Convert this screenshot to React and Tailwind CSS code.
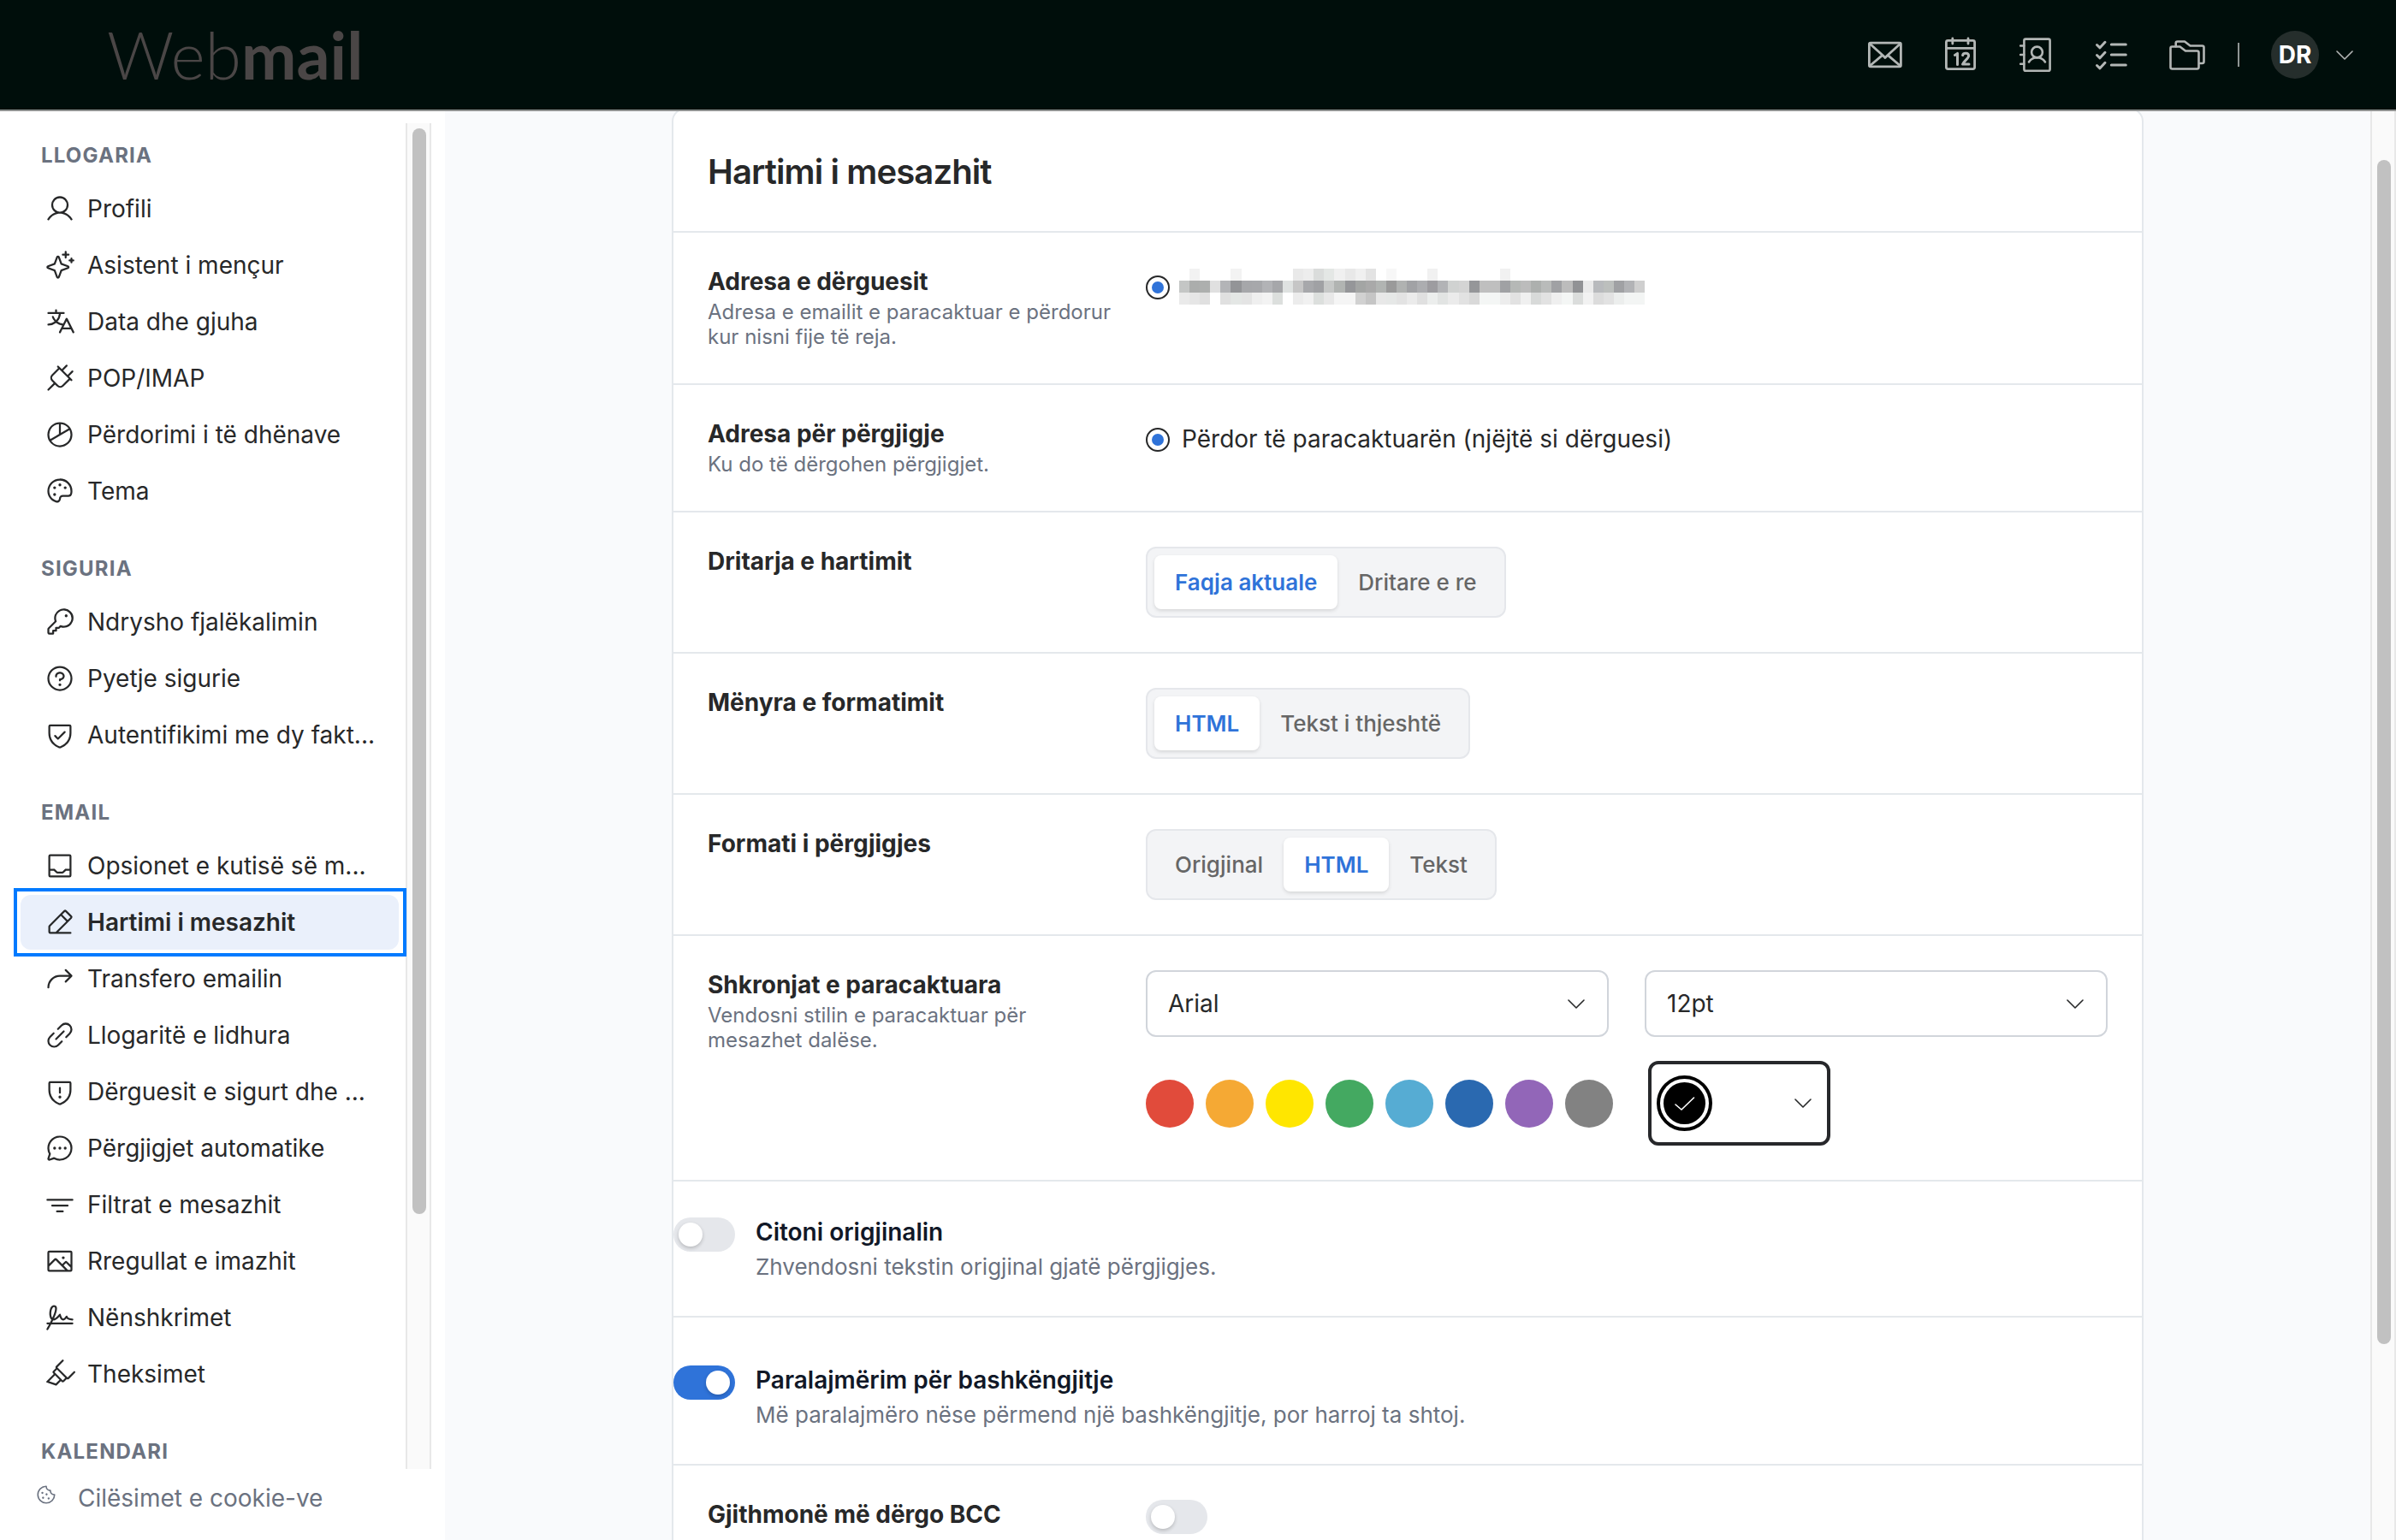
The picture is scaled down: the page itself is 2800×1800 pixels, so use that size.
import React, { useState } from "react";
import {
  PiUser,
  PiSparkle,
  PiTranslate,
  PiPlug,
  PiChartPie,
  PiPalette,
  PiKey,
  PiQuestion,
  PiShieldCheck,
  PiTray,
  PiPencilSimpleLine,
  PiArrowBendUpRight,
  PiLinkSimple,
  PiShieldWarning,
  PiChatCircleDots,
  PiFunnelSimple,
  PiImage,
  PiSignature,
  PiHighlighter,
  PiCookie,
} from "react-icons/pi";

const sections = [
  {
    title: "LLOGARIA",
    items: [
      { icon: PiUser, display: "Profili" },
      { icon: PiSparkle, display: "Asistent i mençur" },
      { icon: PiTranslate, display: "Data dhe gjuha" },
      { icon: PiPlug, display: "POP/IMAP" },
      { icon: PiChartPie, display: "Përdorimi i të dhënave" },
      { icon: PiPalette, display: "Tema" },
    ],
  },
  {
    title: "SIGURIA",
    items: [
      { icon: PiKey, display: "Ndrysho fjalëkalimin" },
      { icon: PiQuestion, display: "Pyetje sigurie" },
      { icon: PiShieldCheck, display: "Autentifikimi me dy fakt..." },
    ],
  },
  {
    title: "EMAIL",
    items: [
      { icon: PiTray, display: "Opsionet e kutisë së m..." },
      { icon: PiPencilSimpleLine, display: "Hartimi i mesazhit" },
      { icon: PiArrowBendUpRight, display: "Transfero emailin" },
      { icon: PiLinkSimple, display: "Llogaritë e lidhura" },
      { icon: PiShieldWarning, display: "Dërguesit e sigurt dhe ..." },
      { icon: PiChatCircleDots, display: "Përgjigjet automatike" },
      { icon: PiFunnelSimple, display: "Filtrat e mesazhit" },
      { icon: PiImage, display: "Rregullat e imazhit" },
      { icon: PiSignature, display: "Nënshkrimet" },
      { icon: PiHighlighter, display: "Theksimet" },
    ],
  },
  { title: "KALENDARI", items: [] },
];

const swatches = [
  "bg-[#e14b3b]",
  "bg-[#f5a934]",
  "bg-[#ffe600]",
  "bg-[#44a961]",
  "bg-[#56acd3]",
  "bg-[#2a69b0]",
  "bg-[#9266b8]",
  "bg-[#828282]",
];

// Pixelated sender address, three rows of 45 blocks
const mosaic = [
  "fff f2f2f2 fff fff fff f3f3f3 fff fff fff fff fff e9e9e9 ededed dadcdb e4e7e5 f0f0f0 e8e8e8 f0f0f0 e3e3e3 fff f7f7f7 fff fff fff f1f1f1 fff fff fff fff fff fff f1f1f1 fff fff fff fff fff fff fff fff fff fff fff fff fff",
  "c4c6c5 abadac adafae e0e0e0 b3b4b7 939497 a6a7aa a7a8ab b2b3b6 a6a7aa dfe2e1 c6c6c6 a7a8ab a0a1a4 c6c8c7 b1b4b2 959699 a3a5a4 a9a9a9 b1b4b2 9a9a9a b0b2b1 a1a2a5 acadb0 9d9ca0 b2b3b6 d0d2d1 d4d4d4 959699 bfbfbf bfbfbf a0a1a4 b5b8b6 bcbcbc adb0ae b9bbba a0a1a4 bcbcbc 919295 eaeaea b8babd bcbfbd a0a1a4 b2b3b6 cfcfcf",
  "eaeaea e6e6e6 e0e0e0 fff e0e0e0 e4e7e5 e4e4e4 efefef f3f3f3 dcdfdd fff ececec f1f1f1 dcdfdd e8e8e8 f5f5f5 f5f5f5 d1d1d1 c5c5c5 e8e8e8 e6e8e7 e3e3e3 ebebeb e0e0e0 eceeed e2e4e3 ebebeb e2e2e2 d9d9d9 f4f6f5 f4f6f5 ededed e2e2e2 f0f0f0 d8dad9 e2e2e2 efefef f4f6f5 dbdddc f2f2f2 dcdcdc e2e2e2 eceeed f3f5f4 f3f5f4",
].map((row) => row.split(" "));

const Chevron = ({ className }) => (
  <svg
    viewBox="0 0 20 11"
    fill="none"
    stroke="currentColor"
    strokeWidth="1.6"
    strokeLinecap="round"
    strokeLinejoin="round"
    className={className}
  >
    <path d="M1 1l9 9 9-9" />
  </svg>
);

const HeaderIcons = () => (
  <div className="flex items-center gap-[42px] text-[#b3b7b6]">
    {/* Mail */}
    <svg viewBox="0 0 46 46" className="w-[46px] h-[46px]" fill="none" stroke="currentColor" strokeWidth="2.8" strokeLinecap="round" strokeLinejoin="round">
      <rect x="4.4" y="9.2" width="37" height="27.6" rx="1.6" />
      <path d="M5 10l15.300 13.700 2.700 2.800 2.700-2.800L40.800 10M5 36l15-12.600M40.800 36L26 23.400" />
    </svg>
    {/* Calendar */}
    <svg viewBox="0 0 46 46" className="w-[46px] h-[46px]" fill="none" stroke="currentColor" strokeWidth="2.8" strokeLinecap="round" strokeLinejoin="round">
      <rect x="6.400" y="6.400" width="33.200" height="33.200" rx="2" />
      <path d="M6.400 15.300h33.200M13.800 4v6M32 4v6" />
      <path d="M16.500 23.400l3-2v13M25.600 23.600c.6-3 7-3.300 7 .6 0 3-5.500 6-7 9.900h7.400" strokeWidth="3" />
    </svg>
    {/* Contacts */}
    <svg viewBox="0 0 46 46" className="w-[46px] h-[46px]" fill="none" stroke="currentColor" strokeWidth="2.6" strokeLinecap="round" strokeLinejoin="round">
      <rect x="9.400" y="4.600" width="30.200" height="37.200" rx="1.800" />
      <path d="M5.200 12.500h4M5.200 23h4M5.200 33.700h4" />
      <circle cx="24.500" cy="20" r="6.400" />
      <path d="M15 31.500c4.500-7 14.500-7 19 0" />
    </svg>
    {/* Tasks */}
    <svg viewBox="0 0 46 46" className="w-[46px] h-[46px]" fill="none" stroke="currentColor" strokeWidth="3" strokeLinecap="round" strokeLinejoin="round">
      <path d="M6.500 11.500l3.500 3.300 6-6.500M6.500 23.500l3.500 3.300 6-6.500M6.500 35.500l3.500 3.300 6-6.500M23.300 11h17M23.300 23h17M23.300 35h17" />
    </svg>
    {/* Files */}
    <svg viewBox="0 0 46 46" className="w-[46px] h-[46px]" fill="none" stroke="currentColor" strokeWidth="2.6" strokeLinecap="round" strokeLinejoin="round">
      <path d="M4.500 15.300q0-1.800 1.800-1.800h9.200l6.500 5h13.500q2 0 2 2v17q0 2-2 2h-29q-2 0-2-2z" />
      <path d="M10.700 13.300V9.500q0-2 2-2h8.300l6.500 5h14q2 0 2 2v16.500q0 2-2 2h-2.500" />
    </svg>
  </div>
);

const Header = () => (
  <header className="h-[130px] shrink-0 flex items-center justify-between bg-[#000e0b] border-b-2 border-[#8f9190] pl-[125px] pr-[50px]">
    <h1 className="font-['Lato',sans-serif] text-[77px] leading-none text-[#4a4646] pb-[2px]">
      <span className="font-light">Web</span>
      <span className="font-bold">mail</span>
    </h1>

    <div className="flex items-center">
      <HeaderIcons />
      <div className="w-[2px] h-7 bg-[#8f9594] ml-[37px] mr-[37px]" />
      <div className="w-14 h-14 rounded-full bg-[#252e2c] flex items-center justify-center text-white text-[28px] font-bold">
        DR
      </div>
      <Chevron className="w-5 h-[11px] ml-5 text-[#b3b7b6]" />
    </div>
  </header>
);

const Sidebar = ({ active, setActive }) => (
  <aside className="w-[520px] shrink-0 bg-white flex flex-col">
    <div className="mt-[14px] h-[1573px] shrink-0 flex">
      <nav className="w-[474px] pl-6 pr-2 pt-[22px] flex flex-col gap-[43px]">
        {sections.map((section) => (
          <div key={section.title}>
            <h2 className="h-8 leading-8 pl-6 mb-[14px] text-[24px] font-bold tracking-[1.2px] text-[#6b7280]">
              {section.title}
            </h2>
            <ul className="flex flex-col gap-[2px]">
              {section.items.map(({ icon: Icon, display }) => (
                <li
                  key={display}
                  onClick={() => setActive(display)}
                  className={
                    display === active
                      ? "relative h-16 pl-7 flex items-center gap-[14px] rounded-xl bg-[#eaf0fb] font-semibold cursor-pointer"
                      : "h-16 pl-7 flex items-center gap-[14px] cursor-pointer"
                  }
                >
                  <Icon className="w-9 h-9 shrink-0" />
                  <span className="text-[28px] whitespace-nowrap">{display}</span>
                  {display === active && (
                    <span className="absolute -inset-2 -right-[9px] border-4 border-[#007aff]" />
                  )}
                </li>
              ))}
            </ul>
          </div>
        ))}
      </nav>
      <div className="w-[30px] bg-[#fafafa] border-x-2 border-[#e8e8e8] pt-[6px] pl-[6px]">
        <div className="w-4 h-[1269px] rounded-full bg-[#c1c1c1]" />
      </div>
    </div>
    <div className="h-[68px] pl-[41px] flex items-center gap-6 text-[#6b7280]">
      <PiCookie className="w-[26px] h-[26px] mb-2" />
      <span className="text-[28px]">Cilësimet e cookie-ve</span>
    </div>
  </aside>
);

const Row = ({ label, hint, children }) => (
  <div className="border-b-2 border-[#e4e8ec] py-10 pl-10 pr-10 flex items-start">
    <div className="w-[512px] shrink-0 pr-8">
      <h3 className="text-[28px] leading-[34px] font-bold">{label}</h3>
      {hint && (
        <p className="mt-1 text-[24px] leading-[29px] text-[#6b7280]">{hint}</p>
      )}
    </div>
    {children}
  </div>
);

const Radio = ({ children }) => (
  <label className="h-12 flex items-center">
    <span className="w-7 h-7 rounded-full border-2 border-[#272829] flex items-center justify-center">
      <span className="w-[14px] h-[14px] rounded-full bg-[#2f73d9]" />
    </span>
    {children}
  </label>
);

const Segmented = ({ options, initial }) => {
  const [value, setValue] = useState(initial);

  return (
    <div className="h-[83px] p-2 flex rounded-xl border-2 border-[#e5e7eb] bg-[#f3f4f6]">
      {options.map((option) => (
        <button
          key={option}
          onClick={() => setValue(option)}
          className={
            value === option
              ? "px-6 rounded-lg bg-white text-[26px] font-semibold text-[#2f73d9] shadow-[0_2px_4px_rgba(0,0,0,0.12)]"
              : "px-6 rounded-lg text-[26px] font-medium text-[#666666]"
          }
        >
          {option}
        </button>
      ))}
    </div>
  );
};

const Select = ({ value }) => (
  <div className="h-[78px] flex-1 px-6 flex items-center justify-between rounded-xl border-2 border-[#d1d5db]">
    <span className="text-[28px]">{value}</span>
    <Chevron className="w-5 h-[11px] mr-[2px]" />
  </div>
);

const Toggle = ({ on }) => (
  <div
    className={
      on
        ? "w-[72px] h-10 px-[6px] shrink-0 rounded-full bg-[#2f73d9] flex items-center justify-end"
        : "w-[72px] h-10 px-[6px] shrink-0 rounded-full bg-[#e5e7eb] flex items-center"
    }
  >
    <span className="w-7 h-7 rounded-full bg-white shadow-[0_2px_4px_rgba(0,0,0,0.2)]" />
  </div>
);

const SwitchText = ({ title, text }) => (
  <div className="ml-6">
    <h3 className="text-[28px] leading-[34px] font-semibold text-[#111827]">
      {title}
    </h3>
    <p className="mt-2 text-[26px] leading-[32px] text-[#6b7280]">{text}</p>
  </div>
);

const App = () => {
  const [active, setActive] = useState("Hartimi i mesazhit");

  return (
    <div className="w-[2800px] h-[1800px] flex flex-col overflow-hidden bg-[#f9fafc] font-['Inter',sans-serif] text-[#272829]">
      <Header />

      <div className="flex-1 min-h-0 flex">
        <Sidebar active={active} setActive={setActive} />

        <main className="flex-1 min-w-0 flex pl-[265px] overflow-hidden">
          <div className="w-[1720px] h-[1800px] -mt-1 shrink-0 rounded-t-2xl border-2 border-[#e4e8ec] bg-white">
            <div className="h-36 pl-10 pt-[3px] flex items-center border-b-2 border-[#e4e8ec]">
              <h2 className="text-[40px] font-semibold tracking-[-0.88px]">Hartimi i mesazhit</h2>
            </div>

            <Row
              label="Adresa e dërguesit"
              hint="Adresa e emailit e paracaktuar e përdorur kur nisni fije të reja."
            >
              <Radio>
                <span className="ml-[11px] w-[544px] h-[42px] -mt-[2px] flex flex-col">
                  {mosaic.map((row, r) => (
                    <span key={r} className="flex flex-1">
                      {row.map((color, c) => (
                        <i key={c} className="flex-1" style={{ backgroundColor: `#${color}` }} />
                      ))}
                    </span>
                  ))}
                </span>
              </Radio>
            </Row>

            <Row label="Adresa për përgjigje" hint="Ku do të dërgohen përgjigjet.">
              <Radio>
                <span className="ml-[14px] -mt-[2px] text-[28px]">
                  Përdor të paracaktuarën (njëjtë si dërguesi)
                </span>
              </Radio>
            </Row>

            <Row label="Dritarja e hartimit">
              <Segmented options={["Faqja aktuale", "Dritare e re"]} initial="Faqja aktuale" />
            </Row>

            <Row label="Mënyra e formatimit">
              <Segmented options={["HTML", "Tekst i thjeshtë"]} initial="HTML" />
            </Row>

            <Row label="Formati i përgjigjes">
              <Segmented options={["Origjinal", "HTML", "Tekst"]} initial="HTML" />
            </Row>

            <Row
              label="Shkronjat e paracaktuara"
              hint="Vendosni stilin e paracaktuar për mesazhet dalëse."
            >
              <div className="flex-1">
                <div className="flex gap-[42px]">
                  <Select value="Arial" />
                  <Select value="12pt" />
                </div>
                <div className="mt-7 flex items-center">
                  <div className="flex gap-[14px]">
                    {swatches.map((color) => (
                      <span key={color} className={`w-14 h-14 rounded-full ${color}`} />
                    ))}
                  </div>
                  <div className="ml-[41px] w-[213px] h-[99px] pl-[6px] pr-[18px] flex items-center justify-between rounded-xl border-4 border-[#27282b]">
                    <span className="w-[65px] h-[65px] rounded-full border-4 border-black p-1">
                      <span className="w-full h-full rounded-full bg-black flex items-center justify-center">
                        <svg viewBox="0 0 24 16" className="w-6 h-4" fill="none" stroke="white" strokeWidth="1.6" strokeLinecap="round" strokeLinejoin="round">
                          <path d="M1 9l7 6L22.500 1" />
                        </svg>
                      </span>
                    </span>
                    <Chevron className="w-5 h-[11px]" />
                  </div>
                </div>
              </div>
            </Row>

            <div className="h-[159px] pt-[42px] flex border-b-2 border-[#e4e8ec]">
              <Toggle />
              <SwitchText title="Citoni origjinalin" text="Zhvendosni tekstin origjinal gjatë përgjigjes." />
            </div>

            <div className="h-[173px] pt-[56px] flex border-b-2 border-[#e4e8ec]">
              <Toggle on />
              <SwitchText
                title="Paralajmërim për bashkëngjitje"
                text="Më paralajmëro nëse përmend një bashkëngjitje, por harroj ta shtoj."
              />
            </div>

            <Row label="Gjithmonë më dërgo BCC">
              <Toggle />
            </Row>
          </div>
        </main>

        {/* Page scrollbar */}
        <div className="w-[30px] shrink-0 bg-[#fafafa] border-x-2 border-[#e8e8e8] pl-[6px] pt-[57px]">
          <div className="w-4 h-[1384px] rounded-full bg-[#c1c1c1]" />
        </div>
      </div>
    </div>
  );
};

export default App;
